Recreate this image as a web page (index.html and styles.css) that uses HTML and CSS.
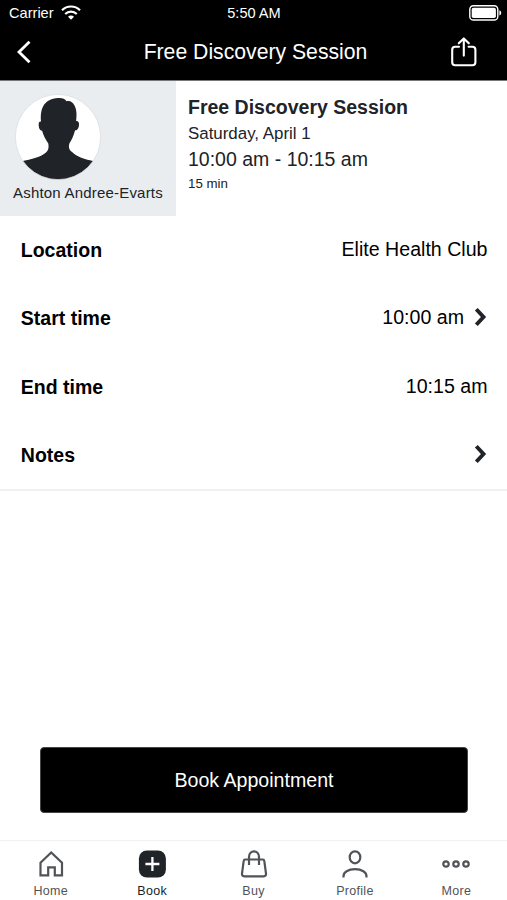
FILE: index.html
```html
<!DOCTYPE html>
<html lang="en">
<head>
    <meta charset="UTF-8">
    <meta name="viewport" content="width=device-width, initial-scale=1.0">
    <title>Free Discovery Session</title>
    <link rel="stylesheet" href="styles.css">
</head>
<body>
    <!-- Header -->
    <header>
        <div class="status-bar">
            <div class="carrier">
                <span>Carrier</span>
                <svg width="20" height="15" viewBox="0 0 20 15" fill="none" stroke="#fff" stroke-width="2.2">
                    <path d="M1 5.3C6 .2 14 .2 19 5.3M4.2 9c3.3-3.2 8.3-3.2 11.6 0"/>
                    <path d="M10 14.8l-3-3c1.6-1.6 4.4-1.6 6 0z" fill="#fff" stroke="none"/>
                </svg>
            </div>
            <span>5:50 AM</span>
            <svg class="battery" width="33" height="16" viewBox="0 0 33 16">
                <rect x=".8" y=".8" width="28" height="14.2" rx="3.6" fill="none" stroke="#fff" stroke-width="1.4"/>
                <rect x="2.7" y="2.7" width="24.2" height="10.4" rx="1.8" fill="#fff"/>
                <path d="M30.4 5.3c2.4.8 2.4 4.4 0 5.2z" fill="#fff"/>
            </svg>
        </div>
        <div class="title-bar">
            <svg width="16" height="24" viewBox="0 0 16 24" fill="none" stroke="#fff" stroke-width="2.8">
                <path d="M14.5 1.8L4 12l10.5 10.2"/>
            </svg>
            <h1>Free Discovery Session</h1>
            <svg class="share" width="26" height="30" viewBox="0 0 26 30" fill="none" stroke="#fff" stroke-width="2.1" stroke-linecap="round" stroke-linejoin="round">
                <path d="M8 9.7H4.2a3 3 0 0 0-3 3v12.6a3 3 0 0 0 3 3h17.2a3 3 0 0 0 3-3V12.7a3 3 0 0 0-3-3h-3.8M12.8 18.6V1.5M7.8 6.3l5-4.9 5 4.9"/>
            </svg>
        </div>
    </header>

    <!-- Session -->
    <section class="session">
        <div class="trainer">
            <svg width="86" height="86" viewBox="0 0 86 86">
                <clipPath id="round"><circle cx="43" cy="43" r="42.5"/></clipPath>
                <circle cx="43" cy="43" r="42.5" fill="#fff"/>
                <path clip-path="url(#round)" fill="#202327" d="M43.500 4c4-.2 6.500 1 8 3.200C58 5.500 61.500 13 61.500 20c0 3-.2 5.500-.4 7 4-.5 3.500 6 1.200 8.500-.8.9-1.600 1-2.200.7-1.400 5.500-3.300 9.500-5.600 13-1.200 3.500-.6 6.500 2.600 8.800C62 63 69 65 80 67.500V86H6V67.500C17 65 26 63 31 58.500c2.800-2.500 2.900-6 2.200-9.300-2.500-3.700-4.800-7.700-6.100-12.500-1.800.3-3.200-2.200-3.400-5-.2-3 .4-4.600 2.400-4.200C25 17 27.500 4.500 43.500 4z"/>
                <circle cx="43" cy="43" r="42.6" fill="none" stroke="#d8dcde" stroke-width=".7"/>
            </svg>
            <p>Ashton Andree-Evarts</p>
        </div>
        <div class="summary">
            <h2>Free Discovery Session</h2>
            <p class="date">Saturday, April 1</p>
            <p class="hours">10:00 am - 10:15 am</p>
            <p class="duration">15 min</p>
        </div>
    </section>

    <!-- Details -->
    <section class="details">
        <div class="row">
            <b>Location</b>
            <span>Elite Health Club</span>
        </div>
        <div class="row">
            <b>Start time</b>
            <span>10:00 am</span>
            <svg class="chevron" width="14" height="20" viewBox="0 0 14 20"><path d="M2.3 2.2L9.5 10l-7.2 7.8"/></svg>
        </div>
        <div class="row">
            <b>End time</b>
            <span>10:15 am</span>
        </div>
        <div class="row">
            <b>Notes</b>
            <svg class="chevron" width="14" height="20" viewBox="0 0 14 20"><path d="M2.3 2.2L9.5 10l-7.2 7.8"/></svg>
        </div>
    </section>

    <button class="book-btn">Book Appointment</button>

    <!-- Tabs -->
    <nav>
        <a>
            <svg width="28" height="28" viewBox="0 0 28 28">
                <path d="M3.5 12.7L14.2 2.5 25 12.7v12.6h-7.2v-8h-6.6v8H3.500z"/>
            </svg>
            Home
        </a>
        <a class="active">
            <svg width="28" height="28" viewBox="0 0 28 28">
                <rect class="tile" x=".9" y=".5" width="27" height="27" rx="8"/>
                <path class="plus" d="M14.4 7v14M7.4 14h14"/>
            </svg>
            Book
        </a>
        <a>
            <svg width="28" height="28" viewBox="0 0 28 28">
                <path d="M5.3 9.5h17.4c.9 0 1.5.5 1.6 1.4l1.7 12.7c.2 1.6-.7 2.7-2.2 2.7H4.200c-1.5 0-2.4-1.1-2.2-2.7l1.7-12.7c.1-.9.7-1.4 1.6-1.4zM9 15V7c0-7.500 10-7.500 10 0v8"/>
            </svg>
            Buy
        </a>
        <a>
            <svg width="28" height="28" viewBox="0 0 28 28">
                <ellipse cx="14" cy="7.3" rx="5.3" ry="6"/>
                <path d="M2.5 27.5v-1.3c0-3.8 4.5-7 11.500-7s11.500 3.200 11.500 7v1.3"/>
            </svg>
            Profile
        </a>
        <a>
            <svg width="28" height="28" viewBox="0 0 28 28">
                <circle cx="4" cy="14" r="2.7"/>
                <circle cx="14" cy="14" r="2.7"/>
                <circle cx="24" cy="14" r="2.7"/>
            </svg>
            More
        </a>
    </nav>
</body>
</html>
```

FILE: styles.css
```css
* {
    box-sizing: border-box;
}

body {
    margin: 0;
    height: 900px;
    display: flex;
    flex-direction: column;
    overflow: hidden;
    background: #fff;
    color: #000;
    font-family: "Liberation Sans", Arial, sans-serif;
    font-size: 19.6px;
}

h1, h2, p {
    margin: 0;
}

header {
    height: 81px;
    background: #000;
    color: #fff;
    border-bottom: 1px solid #777;
}

.status-bar {
    height: 25px;
    display: grid;
    grid-template-columns: 1fr auto 1fr;
    align-items: center;
    padding: 0 5px 0 9px;
    font-size: 14.6px;
}

.status-bar > span {
    margin-right: 3px;
}

.carrier {
    display: flex;
    align-items: center;
    gap: 7px;
}

.battery {
    justify-self: end;
}

.title-bar {
    height: 54px;
    display: grid;
    grid-template-columns: 1fr auto 1fr;
    align-items: center;
    padding: 0 11px 0 15px;
}

h1 {
    font-size: 21.2px;
    font-weight: normal;
}

.share {
    justify-self: end;
    margin-right: 19px;
}

/* Session */
.session {
    display: flex;
    height: 135px;
    color: #202327;
}

.trainer {
    width: 176px;
    padding: 13px 0 0 13px;
    background: #e9edf0;
    font-size: 15px;
    letter-spacing: 0.2px;
    white-space: nowrap;
}

.trainer svg {
    display: block;
    margin-left: 2px;
}

.trainer p {
    margin-top: 4px;
    line-height: 17px;
}

.summary {
    padding: 13px 0 0 12px;
}

h2 {
    font-size: 19.5px;
    line-height: 26px;
}

.date {
    font-size: 16.9px;
    line-height: 28px;
}

.hours {
    font-size: 19.5px;
    line-height: 23px;
}

.duration {
    font-size: 13.3px;
    line-height: 26px;
}

/* Details */
.details {
    height: 275px;
    border-bottom: 2px solid #f0f0f0;
}

.row {
    display: flex;
    align-items: center;
    height: 68.3px;
    padding: 0 19.5px 1px 20.8px;
}

.row b {
    flex: 1;
    padding-top: 2px;
    font-size: 19.5px;
}

.chevron {
    margin: 0 0 1px 9.5px;
    fill: none;
    stroke: #202327;
    stroke-width: 3.9;
}

.book-btn {
    height: 66px;
    margin: 256px 39px 0 40px;
    border: 1px solid #444;
    border-radius: 4px;
    background: #000;
    color: #fff;
    font: inherit;
}

/* Tabs */
nav {
    display: flex;
    height: 60px;
    margin-top: auto;
    border-top: 1px solid #f1f1f1;
}

nav a {
    flex: 1;
    display: flex;
    flex-direction: column;
    align-items: center;
    padding-top: 9px;
    gap: 6px;
    color: #505357;
    font-size: 12.5px;
    line-height: 15px;
    letter-spacing: 0.3px;
}

nav svg {
    fill: none;
    stroke: #505357;
    stroke-width: 2.2;
}

nav .active {
    color: #202327;
}

.tile {
    fill: #202327;
    stroke: none;
}

.plus {
    stroke: #fff;
    stroke-width: 2.3;
}
```
